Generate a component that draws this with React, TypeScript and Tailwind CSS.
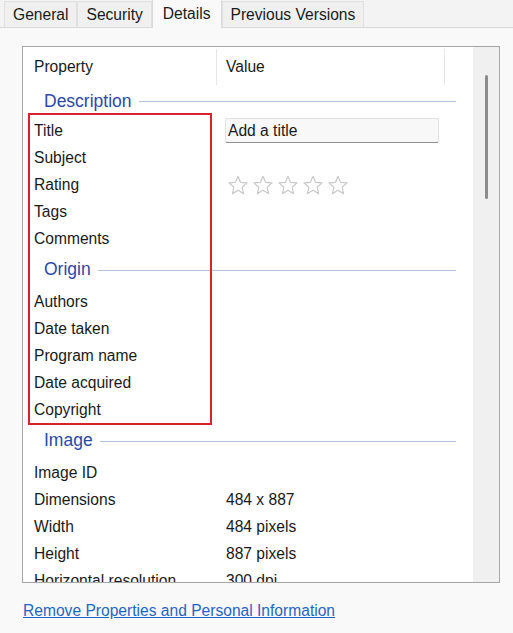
import React from 'react';

type Row = { label: string; value?: string; kind?: 'input' | 'stars' };

const groups: Array<{ name: string; first?: boolean; rows: Row[] }> = [
  {
    name: 'Description',
    first: true,
    rows: [
      { label: 'Title', kind: 'input' },
      { label: 'Subject' },
      { label: 'Rating', kind: 'stars' },
      { label: 'Tags' },
      { label: 'Comments' },
    ],
  },
  {
    name: 'Origin',
    rows: [
      { label: 'Authors' },
      { label: 'Date taken' },
      { label: 'Program name' },
      { label: 'Date acquired' },
      { label: 'Copyright' },
    ],
  },
  {
    name: 'Image',
    rows: [
      { label: 'Image ID' },
      { label: 'Dimensions', value: '484 x 887' },
      { label: 'Width', value: '484 pixels' },
      { label: 'Height', value: '887 pixels' },
      { label: 'Horizontal resolution', value: '300 dpi' },
    ],
  },
];

const tabs = ['General', 'Security', 'Details', 'Previous Versions'];

function Star() {
  return (
    <svg width="22" height="22" viewBox="0 0 24 24" className="shrink-0">
      <path
        d="M12 2.5l2.8 6.6 7.1.6-5.4 4.7 1.6 7-6.1-3.7-6.1 3.7 1.6-7L2.1 9.7l7.1-.6z"
        fill="none"
        stroke="#c9c9c9"
        strokeWidth="1.3"
        strokeLinejoin="round"
      />
    </svg>
  );
}

function GroupHeader({ name, first }: { name: string; first?: boolean }) {
  return (
    <div className={`flex items-center pl-[21px] pr-[17px] ${first ? 'h-[31px]' : 'h-[36px]'}`}>
      <span className="text-[17.5px] text-[#2c48a8] leading-none">{name}</span>
      <div className="flex-1 ml-[7px] h-px bg-[#b4c4e0]" />
    </div>
  );
}

export default function App() {
  return (
    <div
      className="w-[513px] h-[633px] bg-[#f9f9f9] text-[15.6px] text-[#1a1a1a] overflow-hidden"
      style={{ fontFamily: '"Liberation Sans", Arial, sans-serif' }}
    >
      {/* tab strip */}
      <div className="flex items-end h-[28px] bg-[#f3f3f3] border-b border-[#dadada] pl-[4px]">
        {tabs.map(t =>
          t === 'Details' ? (
            <div
              key={t}
              className="h-[29px] -mb-px px-[10px] pt-[2px] bg-[#f9f9f9] border border-b-0 border-[#dadada] flex items-start"
            >
              {t}
            </div>
          ) : (
            <div
              key={t}
              className="h-[26px] px-[8px] bg-[#f0f0f0] border border-b-0 border-[#e0e0e0] flex items-center"
            >
              {t}
            </div>
          ),
        )}
      </div>

      {/* list box */}
      <div className="ml-[22px] mt-[18px] w-[478px] h-[537px] border border-[#a6a6a6] bg-white flex overflow-hidden">
        <div className="flex-1 relative overflow-hidden">
          {/* header */}
          <div className="h-[39px] flex items-center">
            <div className="w-[194px] h-[36px] pl-[11px] flex items-center border-r border-[#e6e6e6]">Property</div>
            <div className="w-[228px] h-[36px] pl-[9px] flex items-center border-r border-[#e6e6e6]">Value</div>
          </div>

          {groups.map(g => (
            <div key={g.name}>
              <GroupHeader name={g.name} first={g.first} />
              {g.rows.map(r => (
                <div key={r.label} className="h-[27px] flex items-center">
                  <div className="w-[194px] pl-[11px] whitespace-nowrap">{r.label}</div>
                  <div className="flex-1 pl-[9px] whitespace-nowrap">
                    {r.kind === 'input' && (
                      <div className="-ml-[1px] w-[214px] h-[25px] pl-[2px] flex items-center bg-[#f8f8f8] border border-[#e2e2e2] border-b-[#8f8f8f] rounded-[2px]">
                        Add a title
                      </div>
                    )}
                    {r.kind === 'stars' && (
                      <div className="flex gap-[3px] ml-[1px]">
                        {[0, 1, 2, 3, 4].map(i => (
                          <Star key={i} />
                        ))}
                      </div>
                    )}
                    {r.value}
                  </div>
                </div>
              ))}
            </div>
          ))}

          {/* annotation box */}
          <div className="absolute left-[5px] top-[66px] w-[184px] h-[312px] border-[2.5px] border-[#d8232f] pointer-events-none" />
        </div>

        {/* scrollbar */}
        <div className="w-[26px] bg-[#f0f0f0] flex justify-center pt-[28px]">
          <div className="w-[3px] h-[124px] bg-[#8c8c8c] rounded-full" />
        </div>
      </div>

      <div className="ml-[23px] mt-[16px]">
        <span className="text-[#1f66c4] underline decoration-[#1f66c4]">Remove Properties and Personal Information</span>
      </div>
    </div>
  );
}
